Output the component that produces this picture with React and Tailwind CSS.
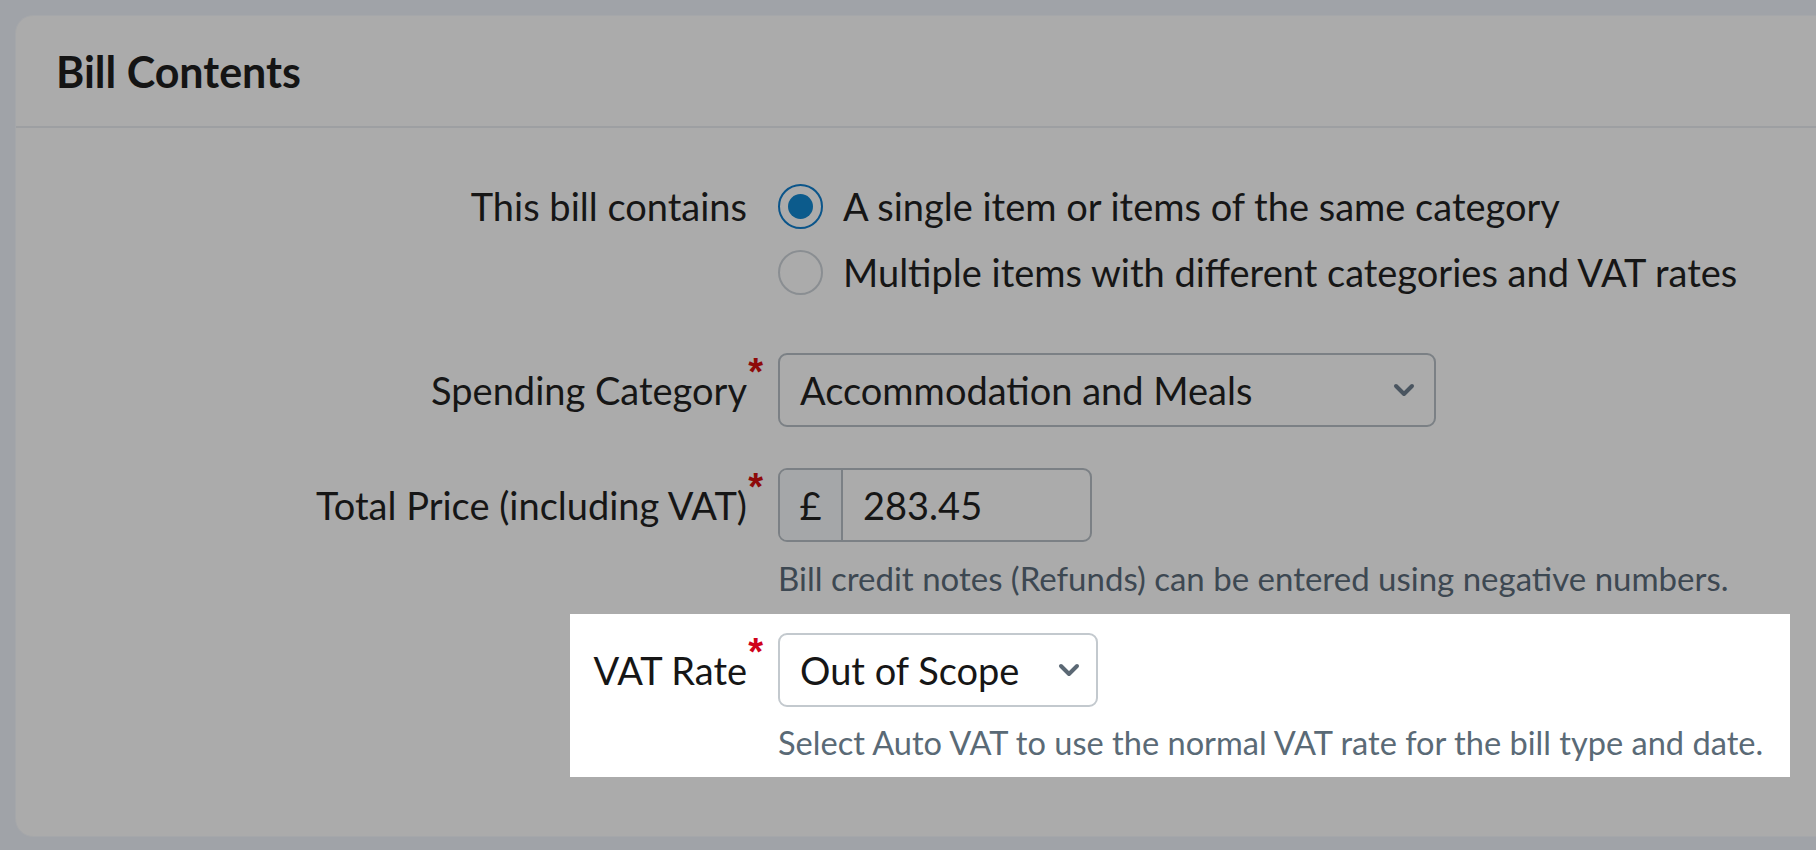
import React from 'react'

const font = { fontFamily: 'Lato, "Open Sans", sans-serif' }
const starFont = { fontFamily: '"Liberation Sans", Arial, sans-serif' }

function Chevron({ className = '' }) {
  return (
    <svg className={className} width="22" height="14" viewBox="0 0 22 14" fill="none">
      <polyline points="3,3 11,11 19,3" stroke="currentColor" strokeWidth="4" strokeLinecap="round" strokeLinejoin="round" />
    </svg>
  )
}

function Label({ children, required, star = 'text-[#8e0a0a]' }) {
  return (
    <span className="relative">
      {children}
      {required && (
        <span
          className={`absolute -right-[16px] -top-[15px] text-[38px] font-bold leading-none ${star}`}
          style={starFont}
        >
          *
        </span>
      )}
    </span>
  )
}

function Radio({ checked, children }) {
  return (
    <label className="flex h-[45px] items-center gap-[20px]">
      {checked ? (
        <span className="grid h-[45px] w-[45px] place-items-center rounded-full border-[2.5px] border-[#0b558a]">
          <span className="h-[25px] w-[25px] rounded-full bg-[#0c5b8c]" />
        </span>
      ) : (
        <span className="h-[45px] w-[45px] rounded-full border-2 border-[#8a8e92]" />
      )}
      <span>{children}</span>
    </label>
  )
}

export default function App() {
  return (
    <div className="h-[850px] overflow-hidden bg-[#a0a3a8] pl-[15px] pt-[15px] text-[38px] leading-[45px] text-[#161616]" style={font}>
      <div className="h-[822px] w-[1840px] rounded-[18px] border border-[#a5a7aa] bg-[#ababab]">
        <div className="flex h-[112px] items-center border-b-2 border-[#9d9fa2] pl-[40px]">
          <h2 className="text-[43px] font-bold text-[#141414]">Bill Contents</h2>
        </div>

        <div className="pt-[56px]">
          <div className="flex">
            <div className="flex h-[45px] w-[731px] items-center justify-end">This bill contains</div>
            <div className="ml-[31px] flex flex-col gap-[21px]">
              <Radio checked>A single item or items of the same category</Radio>
              <Radio>Multiple items with different categories and VAT rates</Radio>
            </div>
          </div>

          <div className="mt-[58px] flex items-center">
            <div className="flex w-[731px] justify-end">
              <Label required>Spending Category</Label>
            </div>
            <div className="ml-[31px] flex h-[74px] w-[658px] items-center justify-between rounded-[9px] border-2 border-[#7b8085] pl-[20px] pr-[19px]">
              <span>Accommodation and Meals</span>
              <Chevron className="text-[#4a5560]" />
            </div>
          </div>

          <div className="mt-[41px] flex items-center">
            <div className="flex w-[731px] justify-end">
              <Label required>Total Price (including VAT)</Label>
            </div>
            <div className="ml-[31px] flex h-[74px] w-[314px] overflow-hidden rounded-[9px] border-2 border-[#7b8085]">
              <div className="flex w-[63px] items-center justify-center border-r-2 border-[#7b8085] bg-[#a5a7a9]">£</div>
              <div className="flex items-center pl-[20px]">283.45</div>
            </div>
          </div>
          <p className="ml-[762px] mt-[16px] text-[33px] leading-[40px] text-[#3d4852]">
            Bill credit notes (Refunds) can be entered using negative numbers.
          </p>

          <div className="ml-[554px] mt-[16px] w-[1220px] bg-white pb-[14px] pt-[19px]">
            <div className="flex items-center">
              <div className="flex w-[177px] justify-end">
                <Label required star="text-[#d0021b]">VAT Rate</Label>
              </div>
              <div className="ml-[31px] flex h-[74px] w-[320px] items-center justify-between rounded-[9px] border-2 border-[#c3c9ce] pl-[20px] pr-[16px]">
                <span>Out of Scope</span>
                <Chevron className="text-[#5b6874]" />
              </div>
            </div>
            <p className="ml-[208px] mt-[16px] text-[32.6px] leading-[40px] text-[#5a6a76]">
              Select Auto VAT to use the normal VAT rate for the bill type and date.
            </p>
          </div>
        </div>
      </div>
    </div>
  )
}
